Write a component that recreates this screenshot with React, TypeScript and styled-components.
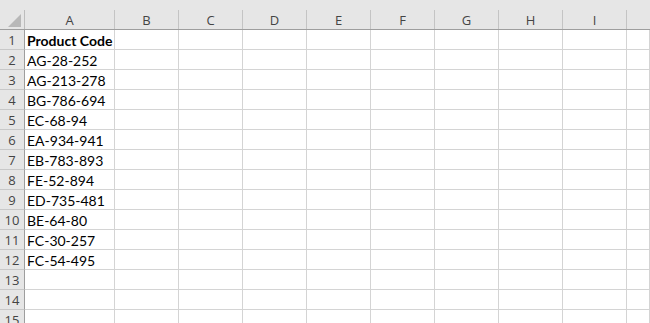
import styled, { createGlobalStyle } from "styled-components";

const GlobalStyle = createGlobalStyle`
  html, body {
    margin: 0;
    padding: 0;
    background: #ffffff;
    overflow: hidden;
  }
`;

const COLS = ["A", "B", "C", "D", "E", "F", "G", "H", "I", ""];
const TEMPLATE = "25px 90px repeat(8, 64px) 1fr";

const codes = [
  "AG-28-252",
  "AG-213-278",
  "BG-786-694",
  "EC-68-94",
  "EA-934-941",
  "EB-783-893",
  "FE-52-894",
  "ED-735-481",
  "BE-64-80",
  "FC-30-257",
  "FC-54-495",
];

const Sheet = styled.div`
  width: 650px;
  height: 323px;
  overflow: hidden;
  font-family: "Open Sans", "Noto Sans", sans-serif;
`;

const HeaderRow = styled.div`
  display: grid;
  grid-template-columns: ${TEMPLATE};
  height: 30px;
  background: #e6e6e6;
  border-bottom: 1px solid #9e9e9e;
  box-sizing: border-box;
`;

const Corner = styled.div`
  position: relative;
  border-right: 1px solid #bdbdbd;
  margin-top: 10px;

  &::after {
    content: "";
    position: absolute;
    right: 3px;
    bottom: 2px;
    width: 0;
    height: 0;
    border-left: 13px solid transparent;
    border-bottom: 13px solid #b8b8b8;
  }
`;

const ColHead = styled.div<{ $last?: boolean }>`
  margin-top: 10px;
  display: flex;
  align-items: center;
  justify-content: center;
  font-size: 13px;
  color: #444444;
  border-right: ${(p) => (p.$last ? "none" : "1px solid #c4c4c4")};
`;

const Row = styled.div`
  display: grid;
  grid-template-columns: ${TEMPLATE};
  height: 20px;
`;

const RowHead = styled.div`
  background: #e6e6e6;
  border-right: 1px solid #9e9e9e;
  border-bottom: 1px solid #c8c8c8;
  display: flex;
  align-items: center;
  justify-content: center;
  padding-top: 1px;
  font-size: 13px;
  color: #444444;
`;

const Cell = styled.div<{ $bold?: boolean }>`
  border-right: 1px solid #d4d4d4;
  border-bottom: 1px solid #d4d4d4;
  display: flex;
  align-items: center;
  padding: 2px 0 0 2px;
  font-family: Lato, "Open Sans", sans-serif;
  font-size: 14px;
  font-weight: ${(p) => (p.$bold ? 700 : 400)};
  color: #000000;
  white-space: nowrap;
  overflow: visible;
`;

export default function App() {
  const rows: string[] = ["Product Code", ...codes, "", "", ""];
  return (
    <Sheet>
      <GlobalStyle />
      <HeaderRow>
        <Corner />
        {COLS.map((c, i) => (
          <ColHead key={i} $last={i === COLS.length - 1}>
            {c}
          </ColHead>
        ))}
      </HeaderRow>
      {rows.map((value, r) => (
        <Row key={r}>
          <RowHead>{r + 1}</RowHead>
          {COLS.map((_, c) => (
            <Cell key={c} $bold={r === 0 && c === 0}>
              {c === 0 ? value : ""}
            </Cell>
          ))}
        </Row>
      ))}
    </Sheet>
  );
}
